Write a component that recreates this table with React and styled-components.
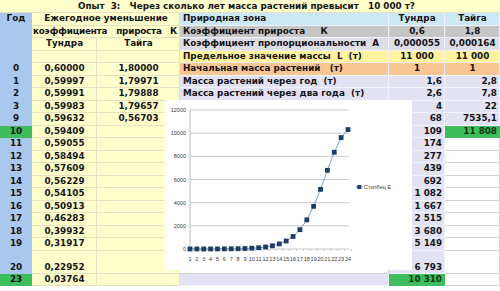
import React from 'react';
import styled, { createGlobalStyle } from 'styled-components';

const GlobalStyle = createGlobalStyle`
  html, body {
    margin: 0;
    padding: 0;
    background: #ffffff;
  }
`;

const palette = {
  year: '#aac8ee',
  coef: '#ffffcc',
  green: '#3dbd5d',
  zone: '#cce8f6',
  growth: '#c6c6c6',
  prop: '#dddde8',
  limit: '#fff3a0',
  start: '#f9c592',
  mass: '#e2e2f4',
  white: '#ffffff',
};

const lines = {
  coef: '#e4e2c0',
  light: '#f2f2fa',
  grid: '#d4d4d4',
  none: 'transparent',
};

const Sheet = styled.div`
  position: relative;
  width: 500px;
  height: 291px;
  display: grid;
  grid-template-columns: 32px 65px 83px 209px 56px 55px;
  grid-template-rows: 13px repeat(19, 12.5px) 23px 12.5px 1fr;
  overflow: hidden;
  font-family: 'DejaVu Sans', 'Liberation Sans', sans-serif;
  font-weight: bold;
  font-size: 8.8px;
  color: #141414;
`;

const Cell = styled.div`
  grid-column: ${({ $span }) => ($span ? `span ${$span}` : 'auto')};
  background: ${({ $bg }) => $bg};
  display: flex;
  align-items: ${({ $bottom }) => ($bottom ? 'flex-end' : 'center')};
  justify-content: ${({ $align }) =>
    $align === 'right' ? 'flex-end' : $align === 'left' ? 'flex-start' : 'center'};
  padding: 0 2px 0 ${({ $indent }) => $indent ?? 3}px;
  box-sizing: border-box;
  border-bottom: 1px solid ${({ $line }) => $line};
  border-right: 1px solid ${({ $line }) => $line};
  color: ${({ $ink }) => $ink || 'inherit'};
  white-space: pre;
  line-height: 11px;
`;

const Word = styled.span`
  margin-left: ${({ $gap }) => $gap};
  letter-spacing: -0.2px;
`;

const TitleCell = styled.div`
  grid-column: span 6;
  background: ${palette.coef};
  padding-left: 78px;
  display: flex;
  align-items: center;
  white-space: pre;
  border-bottom: 1px solid ${lines.coef};
`;

const ChartBox = styled.div`
  position: absolute;
  left: 165px;
  top: 100px;
  width: 247px;
  height: 170px;
  background: #ffffff;
`;

const AxisText = styled.text`
  font-family: 'Liberation Sans', Arial, sans-serif;
  font-weight: normal;
  font-size: 5.5px;
  fill: #3a3a3a;
`;

const c = (text, bg, opts = {}) => ({ text, bg, ...opts });

// Данные по тундре (столбец E) для графика
const mass = [1, 1.6, 2.6, 4, 6.5, 10, 16, 26, 42, 68, 109, 174, 277, 439, 692, 1082, 1667, 2515, 3680, 5149, 6793, 8350, 9620, 10310];

const lower = [
  ['11', '0,59055', '174'],
  ['12', '0,58494', '277'],
  ['13', '0,57609', '439'],
  ['14', '0,56229', '692'],
  ['15', '0,54105', '1 082'],
  ['16', '0,50913', '1 667'],
  ['17', '0,46283', '2 515'],
  ['18', '0,39932', '3 680'],
  ['19', '0,31917', '5 149'],
];

const Y = palette.year;
const K = palette.coef;
const M = palette.mass;
const W = palette.white;

const rows = [
  [
    c('Год', Y, { line: lines.none }),
    c('Ежегодное уменьшение', K, { span: 2, line: lines.coef }),
    c('Природная зона', palette.zone, { align: 'left', line: lines.light }),
    c('Тундра', palette.zone, { line: lines.light }),
    c('Тайга', palette.zone, { line: lines.light }),
  ],
  [
    c('', Y, { line: lines.none }),
    c(
      [
        { word: 'коэффициента', gap: '0' },
        { word: 'прироста', gap: '9px' },
        { word: 'К', gap: 'auto' },
      ],
      K,
      { span: 2, align: 'left', indent: 1, line: lines.coef },
    ),
    c('Коэффициент прироста     К', palette.growth, { align: 'left', line: lines.light }),
    c('0,6', palette.growth, { line: lines.light }),
    c('1,8', palette.growth, { line: lines.light }),
  ],
  [
    c('', Y, { line: lines.none }),
    c('Тундра', K, { line: lines.coef }),
    c('Тайга', K, { line: lines.coef }),
    c('Коэффициент пропорциональности  A', palette.prop, { align: 'left', line: lines.light }),
    c('0,000055', palette.prop, { line: lines.light }),
    c('0,000164', palette.prop, { line: lines.light }),
  ],
  [
    c('', Y, { line: lines.none }),
    c('', K, { line: lines.coef }),
    c('', K, { line: lines.coef }),
    c('Предельное значение массы  L  (т)', palette.limit, { align: 'left', line: lines.light }),
    c('11 000', palette.limit, { line: lines.light }),
    c('11 000', palette.limit, { line: lines.light }),
  ],
  [
    c('0', Y, { line: lines.none }),
    c('0,60000', K, { line: lines.coef }),
    c('1,80000', K, { line: lines.coef }),
    c('Начальная масса растений   (т)', palette.start, { align: 'left', line: lines.light }),
    c('1', palette.start, { line: lines.light }),
    c('1', palette.start, { line: lines.light }),
  ],
  [
    c('1', Y, { line: lines.none }),
    c('0,59997', K, { line: lines.coef }),
    c('1,79971', K, { line: lines.coef }),
    c('Масса растений через год  (т)', M, { align: 'left', line: lines.light }),
    c('1,6', M, { align: 'right', line: lines.light }),
    c('2,8', M, { align: 'right', line: lines.light }),
  ],
  [
    c('2', Y, { line: lines.none }),
    c('0,59991', K, { line: lines.coef }),
    c('1,79888', K, { line: lines.coef }),
    c('Масса растений через два года  (т)', M, { align: 'left', line: lines.light }),
    c('2,6', M, { align: 'right', line: lines.light }),
    c('7,8', M, { align: 'right', line: lines.light }),
  ],
  [
    c('3', Y, { line: lines.none }),
    c('0,59983', K, { line: lines.coef }),
    c('1,79657', K, { line: lines.coef }),
    c('', W, { line: lines.grid }),
    c('4', M, { align: 'right', line: lines.light }),
    c('22', M, { align: 'right', line: lines.light }),
  ],
  [
    c('9', Y, { line: lines.none }),
    c('0,59632', K, { line: lines.coef }),
    c('0,56703', K, { line: lines.coef }),
    c('', W, { line: lines.grid }),
    c('68', M, { align: 'right', line: lines.light }),
    c('7535,1', M, { align: 'right', line: lines.light }),
  ],
  [
    c('10', palette.green, { line: lines.none }),
    c('0,59409', K, { line: lines.coef }),
    c('', K, { line: lines.coef }),
    c('', W, { line: lines.grid }),
    c('109', M, { align: 'right', line: lines.light }),
    c('11 808', palette.green, { align: 'right', line: lines.none, ink: '#0c3a10' }),
  ],
  ...lower.map(([year, k, e]) => [
    c(year, Y, { line: lines.none }),
    c(k, K, { line: lines.coef }),
    c('', K, { line: lines.coef }),
    c('', W, { line: lines.grid }),
    c(e, M, { align: 'right', line: lines.light }),
    c('', W, { line: lines.grid }),
  ]),
  [
    c('20', Y, { line: lines.none, bottom: true }),
    c('0,22952', K, { line: lines.coef, bottom: true }),
    c('', K, { line: lines.coef }),
    c('', W, { line: lines.grid }),
    c('6 793', M, { align: 'right', line: lines.light, bottom: true }),
    c('', W, { line: lines.grid }),
  ],
  [
    c('23', palette.green, { line: lines.none }),
    c('0,03764', K, { line: lines.coef }),
    c('', K, { line: lines.coef }),
    c('', M, { line: lines.light }),
    c('10 310', palette.green, { align: 'right', line: lines.none, ink: '#0c3a10' }),
    c('', W, { line: lines.grid }),
  ],
  [
    c('', W, { span: 6, line: lines.none }),
  ],
];

const Chart = () => {
  const left = 25;
  const right = 184;
  const top = 10;
  const bottom = 149;
  const step = (right - 1 - left) / 23;
  const py = v => bottom - (v / 12000) * (bottom - top);
  const pts = mass.map((v, i) => [left + i * step, py(v)]);

  return (
    <ChartBox>
      <svg width="247" height="170" viewBox="0 0 247 170">
        {[0, 2000, 4000, 6000, 8000, 10000, 12000].map(v => (
          <g key={v}>
            <line x1={left} x2={right} y1={py(v)} y2={py(v)} stroke="#bdbdbd" strokeWidth="0.8" />
            <AxisText x={left - 4} y={py(v) + 2} textAnchor="end">{v}</AxisText>
          </g>
        ))}
        <line x1={left} x2={left} y1={top} y2={bottom + 2} stroke="#a8a8a8" strokeWidth="0.8" />
        {pts.map(([x], i) => (
          <g key={i}>
            <line x1={x + step / 2} x2={x + step / 2} y1={bottom} y2={bottom + 2} stroke="#a8a8a8" strokeWidth="0.6" />
            <AxisText x={x} y={161} textAnchor="middle">{i + 1}</AxisText>
          </g>
        ))}
        <polyline
          points={pts.map(p => p.join(',')).join(' ')}
          fill="none"
          stroke="#6f93c4"
          strokeWidth="0.9"
        />
        {pts.map(([x, y], i) => (
          <rect key={i} x={x - 2.4} y={y - 2.4} width="4.8" height="4.8" fill="#1d3c66" />
        ))}
        <line x1="191" x2="198" y1="87" y2="87" stroke="#6f93c4" strokeWidth="0.9" />
        <rect x="192.3" y="85" width="4" height="4" fill="#1d3c66" />
        <AxisText x="199" y="89">Столбец E</AxisText>
      </svg>
    </ChartBox>
  );
};

const App = () => (
  <>
    <GlobalStyle />
    <Sheet>
      <TitleCell>Опыт  3:   Через сколько лет масса растений превысит   10 000 т?</TitleCell>
      {rows.map((row, r) =>
        row.map((cell, i) => (
          <Cell
            key={`${r}-${i}`}
            $span={cell.span}
            $bg={cell.bg}
            $align={cell.align}
            $indent={cell.indent}
            $line={cell.line}
            $bottom={cell.bottom}
            $ink={cell.ink}
          >
            {Array.isArray(cell.text)
              ? cell.text.map(({ word, gap }) => (
                  <Word key={word} $gap={gap}>
                    {word}
                  </Word>
                ))
              : cell.text}
          </Cell>
        )),
      )}
      <Chart />
    </Sheet>
  </>
);

export default App;
